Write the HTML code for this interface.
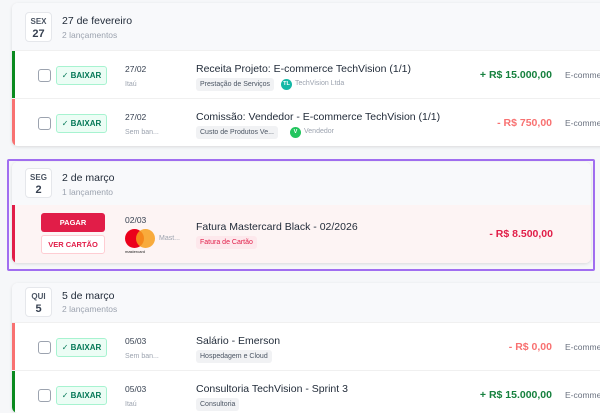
<!DOCTYPE html>
<html><head><meta charset="utf-8"><style>
*{box-sizing:border-box;margin:0;padding:0}
body{width:600px;height:400px;overflow:hidden;background:#f6f7f9;font-family:"Liberation Sans","DejaVu Sans",sans-serif;position:relative;color:#1f2937}
.card{position:absolute;left:12px;width:600px;background:#fff;border-radius:6px;box-shadow:0 1px 3px rgba(0,0,0,.12);overflow:hidden}
.hdr{background:#f8f9fb;position:relative}
.day{position:absolute;left:13px;width:27px;height:30px;border:1px solid #e5e7eb;border-radius:4px;background:#fff;text-align:center;font-size:8px;font-weight:bold;color:#4b5563;line-height:13px;padding-top:2px}
.day b{display:block;font-size:11px;color:#374151}
.dt{position:absolute;left:50px;font-size:10.5px;color:#1f2937}
.dc{position:absolute;left:50px;font-size:8.5px;color:#9ca3af}
.row{position:relative;height:48px;border-top:1px solid #f0f0f0}
.bar{position:absolute;left:0;top:0;bottom:0;width:3px}
.cb{position:absolute;left:26px;top:18px;width:13px;height:13px;border:1.5px solid #9ca3af;border-radius:3px}
.bx{position:absolute;left:44px;top:15px;width:51px;height:19px;border:1px solid #a7f3d0;background:#ecfdf5;border-radius:3px;color:#047857;font-size:8px;font-weight:bold;line-height:17px;text-align:center}
.d1{position:absolute;left:113px;top:13px;font-size:8.5px;color:#374151}
.d2{position:absolute;left:113px;top:30px;font-size:7px;color:#9ca3af}
.t{position:absolute;left:184px;top:12px;font-size:10.5px;color:#1f2937;white-space:nowrap}
.tag{position:absolute;left:184px;top:27px;height:13px;padding:0 4px;background:#f1f2f4;border-radius:3px;font-size:7px;color:#4b5563;line-height:13px;white-space:nowrap}
.av{position:absolute;top:28px;width:11px;height:11px;border-radius:50%;color:#fff;font-size:5.5px;font-weight:bold;text-align:center;line-height:11px}
.avn{position:absolute;top:29px;font-size:7px;color:#9ca3af;white-space:nowrap}
.amt{position:absolute;right:60px;top:18px;font-size:10.5px;font-weight:bold;white-space:nowrap}
.ec{position:absolute;left:553px;top:19px;font-size:8.5px;color:#6b7280;white-space:nowrap}
</style></head><body>

<div class="card" style="top:3px;height:143px">
 <div class="hdr" style="height:47px">
  <div class="day" style="top:9px">SEX<b>27</b></div>
  <div class="dt" style="top:12px">27 de fevereiro</div>
  <div class="dc" style="top:27px">2 lançamentos</div>
 </div>
 <div class="row"><div class="bar" style="background:#0a8a1e"></div><div class="cb"></div><div class="bx">✓ BAIXAR</div>
  <div class="d1">27/02</div><div class="d2">Itaú</div>
  <div class="t">Receita Projeto: E-commerce TechVision (1/1)</div>
  <div class="tag">Prestação de Serviços</div>
  <div class="av" style="left:269px;background:#14b8a6">TL</div><div class="avn" style="left:283px">TechVision Ltda</div>
  <div class="amt" style="color:#15803d">+ R$ 15.000,00</div><div class="ec">E-comme</div>
 </div>
 <div class="row"><div class="bar" style="background:#f87171"></div><div class="cb"></div><div class="bx">✓ BAIXAR</div>
  <div class="d1">27/02</div><div class="d2">Sem ban...</div>
  <div class="t">Comissão: Vendedor - E-commerce TechVision (1/1)</div>
  <div class="tag">Custo de Produtos Ve...</div>
  <div class="av" style="left:278px;background:#22c55e">V</div><div class="avn" style="left:292px">Vendedor</div>
  <div class="amt" style="color:#f87171">- R$ 750,00</div><div class="ec">E-comme</div>
 </div>
</div>

<div style="position:absolute;left:7px;top:159px;width:588px;height:112px;border:2px solid #a16ef0;border-radius:2px"></div>
<div class="card" style="top:162px;height:101px;width:579px">
 <div class="hdr" style="height:43px">
  <div class="day" style="top:6px">SEG<b>2</b></div>
  <div class="dt" style="top:10px">2 de março</div>
  <div class="dc" style="top:25px">1 lançamento</div>
 </div>
 <div style="position:relative;height:58px;background:#fdf4f4">
  <div class="bar" style="background:#e11d48"></div>
  <div style="position:absolute;left:29px;top:8px;width:64px;height:19px;background:#e11d48;border-radius:3px;color:#fff;font-size:7.5px;font-weight:bold;text-align:center;line-height:19px">PAGAR</div>
  <div style="position:absolute;left:29px;top:30px;width:64px;height:19px;background:#fff;border:1px solid #fecdd3;border-radius:3px;color:#e11d48;font-size:7.5px;font-weight:bold;text-align:center;line-height:17px">VER CARTÃO</div>
  <div class="d1" style="top:10px">02/03</div>
  <div style="position:absolute;left:113px;top:24px;width:19px;height:19px;border-radius:50%;background:#eb001b"></div>
  <div style="position:absolute;left:124px;top:24px;width:19px;height:19px;border-radius:50%;background:#f79e1b;opacity:.85"></div>
  <div style="position:absolute;left:113px;top:44px;font-size:4px;color:#222">mastercard</div>
  <div style="position:absolute;left:147px;top:30px;font-size:7px;color:#9ca3af">Mast...</div>
  <div class="t" style="left:184px;top:16px">Fatura Mastercard Black - 02/2026</div>
  <div class="tag" style="left:184px;top:31px;background:#fde8ec;color:#e11d48">Fatura de Cartão</div>
  <div class="amt" style="right:38px;top:23px;color:#e11d48">- R$ 8.500,00</div>
 </div>
</div>

<div class="card" style="top:283px;height:130px">
 <div class="hdr" style="height:39px">
  <div class="day" style="top:4px">QUI<b>5</b></div>
  <div class="dt" style="top:7px">5 de março</div>
  <div class="dc" style="top:21px">2 lançamentos</div>
 </div>
 <div class="row"><div class="bar" style="background:#f87171"></div><div class="cb"></div><div class="bx">✓ BAIXAR</div>
  <div class="d1">05/03</div><div class="d2">Sem ban...</div>
  <div class="t">Salário - Emerson</div>
  <div class="tag">Hospedagem e Cloud</div>
  <div class="amt" style="color:#f87171">- R$ 0,00</div><div class="ec">E-comme</div>
 </div>
 <div class="row"><div class="bar" style="background:#0a8a1e"></div><div class="cb"></div><div class="bx">✓ BAIXAR</div>
  <div class="d1">05/03</div><div class="d2">Itaú</div>
  <div class="t">Consultoria TechVision - Sprint 3</div>
  <div class="tag">Consultoria</div>
  <div class="amt" style="color:#15803d">+ R$ 15.000,00</div><div class="ec">E-comme</div>
 </div>
</div>
</body></html>
